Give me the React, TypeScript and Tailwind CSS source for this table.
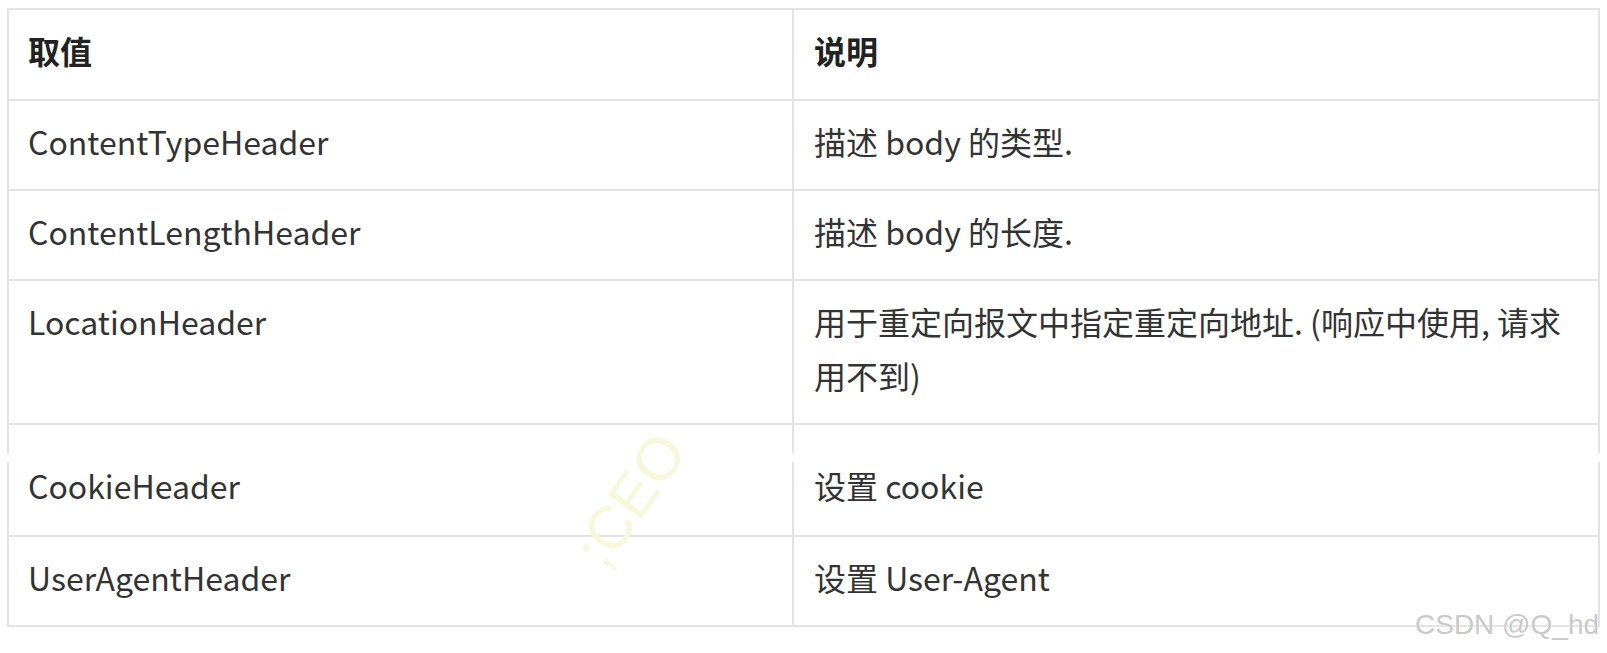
import React from "react";

const rows: { name: string; desc: React.ReactNode; tall?: boolean }[] = [
  { name: "ContentTypeHeader", desc: "描述 body 的类型." },
  { name: "ContentLengthHeader", desc: "描述 body 的长度." },
  { name: "LocationHeader", desc: "用于重定向报文中指定重定向地址. (响应中使用, 请求用不到)" },
  { name: "CookieHeader", desc: "设置 cookie", tall: true },
  { name: "UserAgentHeader", desc: "设置 User-Agent" },
];

export default function App() {
  return (
    <div className="w-[1607px] h-[653px] bg-white overflow-hidden font-['Noto_Sans_CJK_SC','Noto_Sans',sans-serif] text-[#333] text-[32px] leading-[54px]">
      <div className="relative ml-[7px] pt-[8px] w-[1593px]">
        <table className="w-full border-collapse table-fixed">
          <colgroup>
            <col className="w-[785px]" />
            <col />
          </colgroup>
          <thead>
            <tr>
              <th className="border-2 border-[#e3e3e3] px-[19px] pt-[13px] pb-[22px] text-left align-top font-bold text-[#222]">取值</th>
              <th className="border-2 border-[#e3e3e3] px-[20px] pt-[13px] pb-[22px] text-left align-top font-bold text-[#222]">说明</th>
            </tr>
          </thead>
          <tbody>
            {rows.map((r) => (
              <tr key={r.name}>
                <td
                  className={
                    r.tall
                      ? "border-2 border-[#e3e3e3] px-[19px] pt-[33px] pb-[23px] align-top"
                      : "border-2 border-[#e3e3e3] px-[19px] pt-[13px] pb-[21px] align-top"
                  }
                >
                  {r.name}
                </td>
                <td
                  className={
                    r.tall
                      ? "border-2 border-[#e3e3e3] pl-[20px] pr-[30px] pt-[33px] pb-[23px] align-top"
                      : "border-2 border-[#e3e3e3] pl-[20px] pr-[30px] pt-[13px] pb-[21px] align-top"
                  }
                >
                  {r.desc}
                </td>
              </tr>
            ))}
          </tbody>
        </table>

        {/* seam of the stitched screenshot */}
        <div className="absolute left-[-4px] right-[-4px] top-[453px] h-[9px] bg-white" />

        {/* faint watermark */}
        <div className="absolute left-[550px] top-[470px] -rotate-[55deg] text-[60px] font-['Liberation_Sans',sans-serif] text-[#f7f7dc] leading-none select-none">
          ;CEO
        </div>
      </div>

      <div className="absolute left-[1415px] top-[611px] text-[28px] leading-none font-['Liberation_Sans',sans-serif] text-[#c9c9c9] [-webkit-text-stroke:1px_#ffffff] [paint-order:stroke_fill]">
        CSDN @Q_hd
      </div>
    </div>
  );
}
